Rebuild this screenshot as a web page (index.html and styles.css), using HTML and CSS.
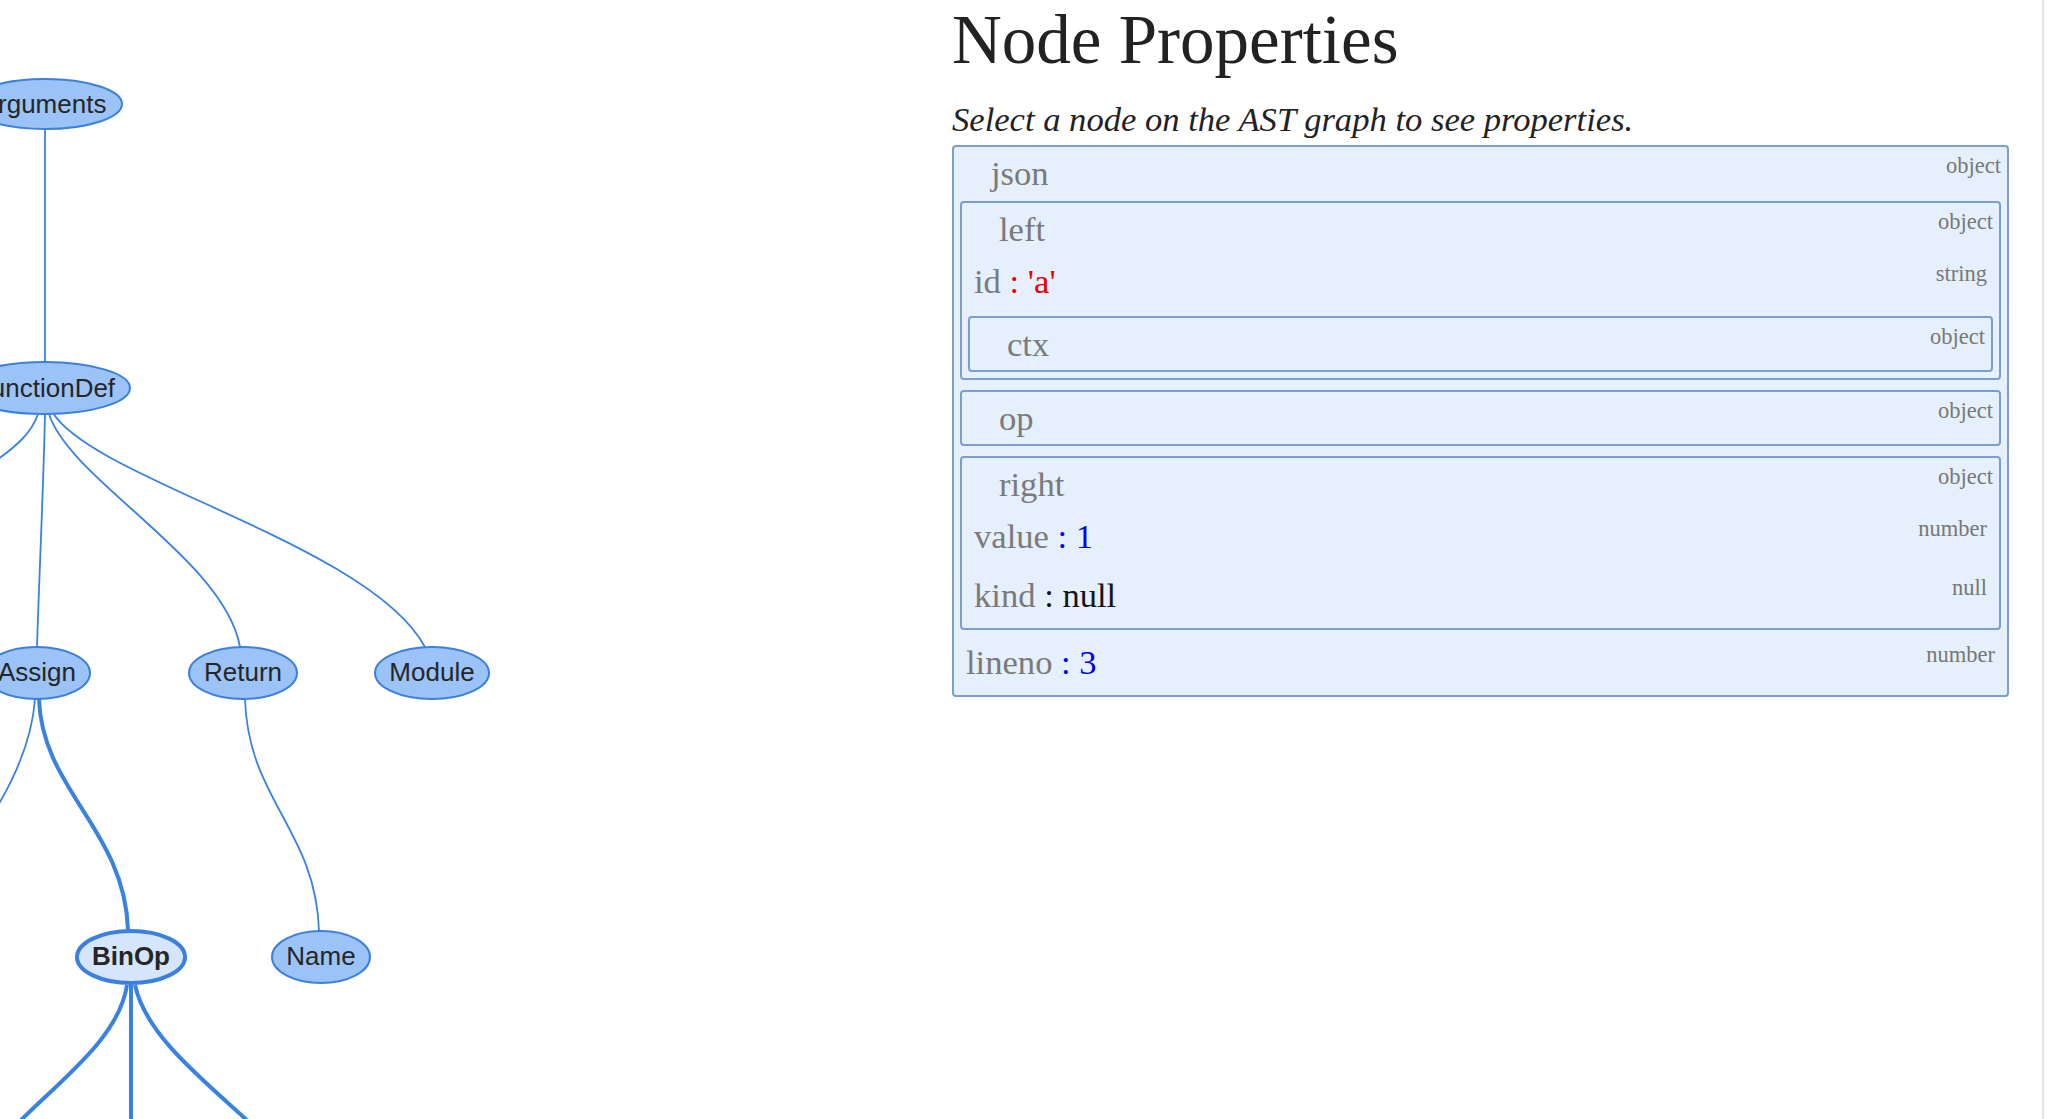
FILE: index.html
```html
<!DOCTYPE html>
<html lang="en">
<head>
<meta charset="utf-8">
<title>AST Viewer</title>
<link rel="stylesheet" href="styles.css">
</head>
<body>
<div class="page">
  <div class="graph-pane">
    <svg class="graph" width="952" height="1119" viewBox="0 0 952 1119" xmlns="http://www.w3.org/2000/svg">
      <g class="edges">
        <path class="edge" d="M45,130 L45,362"/>
        <path class="edge" d="M38,414 C32,432 18,446 -12,466"/>
        <path class="edge" d="M45,415 C43,500 39,580 37,647"/>
        <path class="edge" d="M49,414 C70,480 225,560 240,647"/>
        <path class="edge" d="M53,413 C95,480 370,545 425,647"/>
        <path class="edge" d="M35,699 C32,740 15,778 -6,812"/>
        <path class="edge" d="M245,699 C248,800 316,830 319,931"/>
        <path class="edge thick" d="M39,699 C42,790 125,830 128,930"/>
        <path class="edge thick" d="M127,985 C118,1045 45,1090 -8,1150"/>
        <path class="edge thick" d="M131,985 L131,1130"/>
        <path class="edge thick" d="M135,985 C148,1045 225,1095 278,1150"/>
      </g>
      <g class="nodes">
        <ellipse class="node" cx="45" cy="104" rx="77" ry="25"/>
        <text class="label" x="45" y="113">arguments</text>
        <ellipse class="node" cx="45" cy="388" rx="85" ry="26"/>
        <text class="label" x="45" y="397">FunctionDef</text>
        <ellipse class="node" cx="37" cy="673" rx="53" ry="26"/>
        <text class="label" x="37" y="681">Assign</text>
        <ellipse class="node" cx="243" cy="673" rx="54" ry="26"/>
        <text class="label" x="243" y="681">Return</text>
        <ellipse class="node" cx="432" cy="673" rx="57" ry="26"/>
        <text class="label" x="432" y="681">Module</text>
        <ellipse class="node selected" cx="131" cy="957" rx="54" ry="26"/>
        <text class="label bold" x="131" y="965">BinOp</text>
        <ellipse class="node" cx="321" cy="957" rx="49" ry="26"/>
        <text class="label" x="321" y="965">Name</text>
      </g>
    </svg>
  </div>
  <div class="props-pane">
    <h1 class="title">Node Properties</h1>
    <p class="hint">Select a node on the AST graph to see properties.</p>
    <div class="box">
      <div class="head"><span class="key">json</span><span class="type">object</span></div>
      <div class="box">
        <div class="head"><span class="key">left</span><span class="type">object</span></div>
        <div class="prim"><span class="pair"><span class="key">id</span><span class="str"> : 'a'</span></span><span class="type">string</span></div>
        <div class="box">
          <div class="head"><span class="key">ctx</span><span class="type">object</span></div>
        </div>
      </div>
      <div class="box">
        <div class="head"><span class="key">op</span><span class="type">object</span></div>
      </div>
      <div class="box">
        <div class="head"><span class="key">right</span><span class="type">object</span></div>
        <div class="prim"><span class="pair"><span class="key">value</span><span class="num"> : 1</span></span><span class="type">number</span></div>
        <div class="prim"><span class="pair"><span class="key">kind</span><span class="nul"> : null</span></span><span class="type">null</span></div>
      </div>
      <div class="prim"><span class="pair"><span class="key">lineno</span><span class="num"> : 3</span></span><span class="type">number</span></div>
    </div>
  </div>
  <div class="gutter"></div>
  <div class="scroll-edge"></div>
</div>
</body>
</html>
```

FILE: styles.css
```css
html, body {
  margin: 0;
  padding: 0;
  background: #ffffff;
}

body {
  width: 2048px;
  height: 1119px;
  overflow: hidden;
}

.page {
  display: flex;
  width: 2048px;
  height: 1119px;
}

.graph-pane {
  width: 952px;
  height: 1119px;
  flex: none;
  overflow: hidden;
}

.graph {
  display: block;
  overflow: hidden;
}

.edge {
  fill: none;
  stroke: #3a82e0;
  stroke-width: 1.8;
}

.edge.thick {
  stroke-width: 4;
}

.node {
  fill: #9cc3f7;
  stroke: #3a80dc;
  stroke-width: 2;
}

.node.selected {
  fill: #d5e6fc;
  stroke-width: 4;
}

.label {
  font-family: "Liberation Sans", Arial, sans-serif;
  font-size: 26px;
  fill: #262626;
  text-anchor: middle;
}

.label.bold {
  font-weight: 700;
}

.props-pane {
  width: 1057px;
  flex: none;
  font-family: "Liberation Serif", "Times New Roman", serif;
  font-size: 34.6px;
  color: #222222;
}

.title {
  margin: 0;
  font-size: 69px;
  line-height: 80px;
  font-weight: 400;
  color: #222222;
}

.hint {
  margin: 19px 0 6px;
  font-style: italic;
  line-height: 40px;
  color: #222222;
}

.box {
  border: 2px solid #7b9ed0;
  border-radius: 4px;
  background: #e6f0fd;
  padding: 6px;
}

.box .box {
  margin-top: 8px;
}

.box + .box {
  margin-top: 10px;
}

.head {
  display: flex;
  justify-content: space-between;
  align-items: flex-start;
  line-height: 40px;
  padding-left: 31px;
}

.prim {
  display: flex;
  justify-content: space-between;
  align-items: flex-start;
  line-height: 40px;
  padding: 12px 6px 7px 6px;
}

.key {
  color: #7a7a7a;
}

.type {
  font-size: 22.5px;
  line-height: normal;
  color: #777777;
}

.str {
  color: #ee0000;
}

.num {
  color: #0000ee;
}

.nul {
  color: #151515;
}

.gutter {
  flex: 1;
}

.scroll-edge {
  width: 4px;
  flex: none;
  border-left: 2px solid #e4e4e4;
}
```
